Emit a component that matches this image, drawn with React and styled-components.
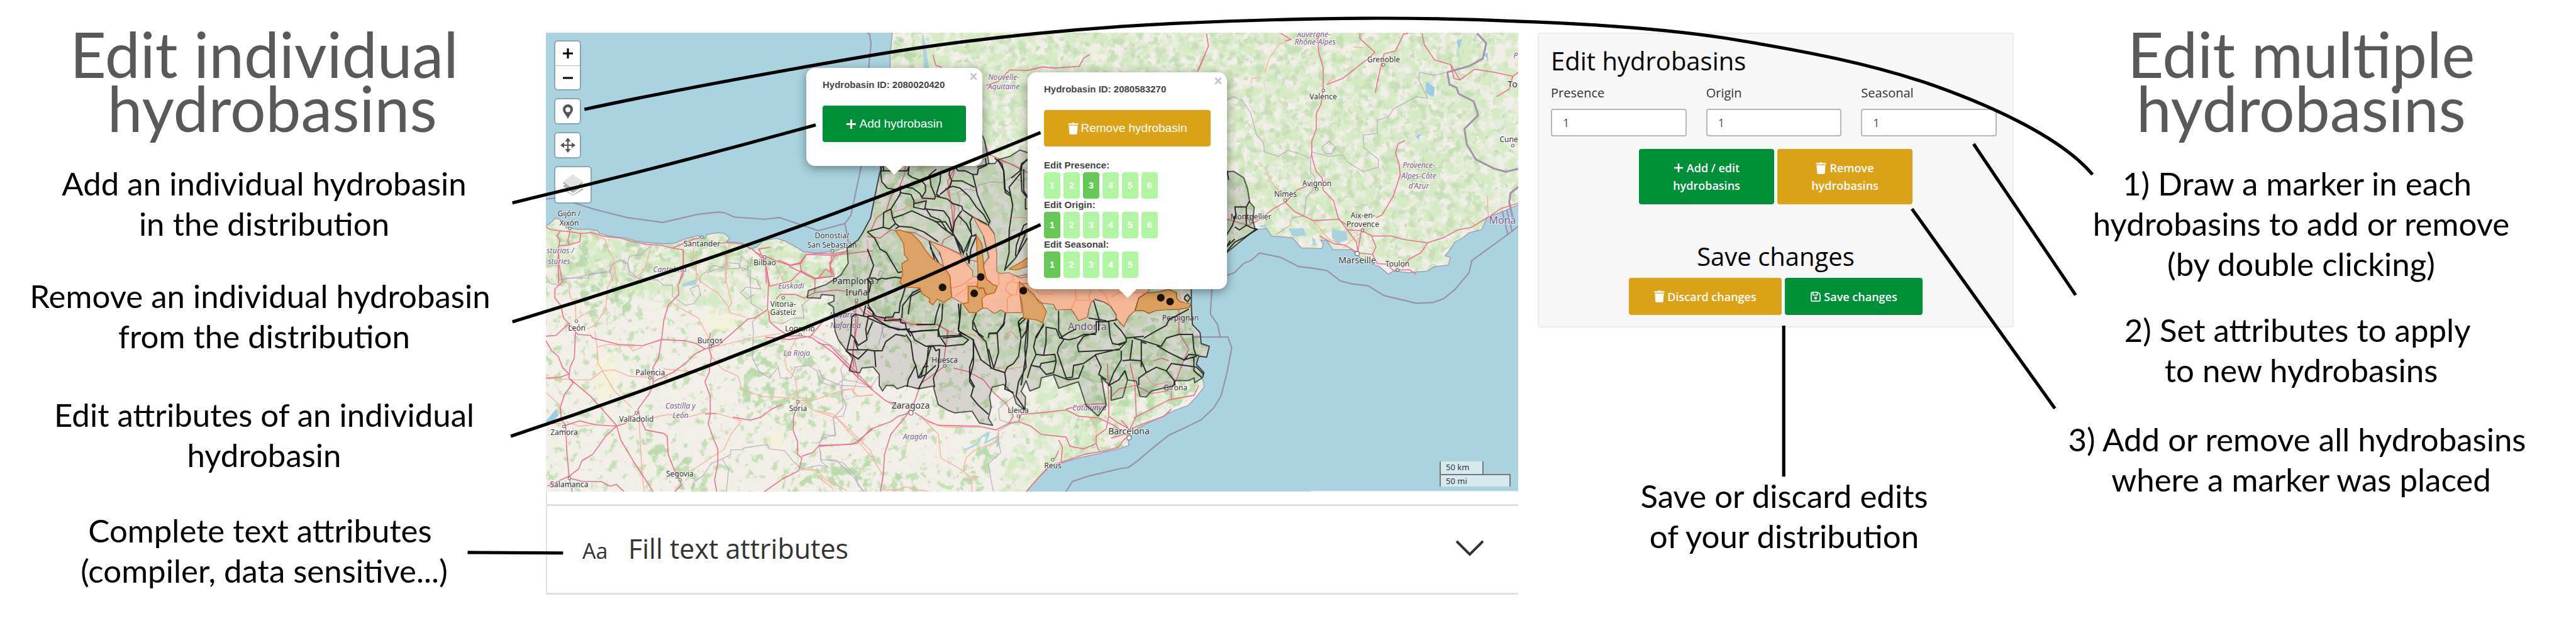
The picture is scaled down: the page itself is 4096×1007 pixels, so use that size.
import React from "react";
import styled, { createGlobalStyle, css } from "styled-components";
import { FaRegFloppyDisk } from "react-icons/fa6";

const GlobalStyle = createGlobalStyle`
  * { box-sizing: border-box; }
  body { margin: 0; background: #fff; }
  h1, h2, p { margin: 0; font-weight: 400; }
  button, input { font: inherit; margin: 0; }
`;

/* ---------- page ---------- */

const Page = styled.main`
  position: relative;
  display: grid;
  grid-template-columns: 868fr 1546fr 788fr 894fr;
  align-items: start;
  color: #000;
  overflow: hidden;
`;

const NoteColumn = styled.section`
  padding: 42px ${(p) => (p.$side === "left" ? "28px 0 0" : "0 0 20px")};
  font-family: Lato, "Liberation Sans", sans-serif;
  text-align: center;
  white-space: pre;
`;

const NoteTitle = styled.h1`
  font-size: 100px;
  line-height: 86px;
  color: #595959;
`;

const Note = styled.p`
  margin-top: ${(p) => p.$before}px;
  font-size: 51px;
  line-height: 64px;
`;

const Connectors = styled.svg`
  position: absolute;
  top: 0;
  left: 0;
  width: 100%;
  pointer-events: none;
  z-index: 5;
`;

/* ---------- map ---------- */

const Editor = styled.section`
  padding-top: 52px;
`;

const MapFrame = styled.div`
  position: relative;
  overflow: hidden;
  font-family: "Liberation Sans", Arial, sans-serif;
`;

const MapDrawing = styled.svg`
  display: block;
  width: 100%;
  aspect-ratio: 1546 / 730;
  background: #aad3df;
  font-family: "Noto Sans", "Open Sans", sans-serif;
`;

const ControlStack = styled.div`
  position: absolute;
  top: 14px;
  left: 15px;
  display: flex;
  flex-direction: column;
  align-items: flex-start;
  gap: 16px;
`;

const ControlBar = styled.div`
  display: flex;
  flex-direction: column;
  border-radius: 4px;
  background: #fff;
  box-shadow: 0 0 0 2px rgba(70, 110, 125, 0.4);
`;

const ControlButton = styled.button`
  display: flex;
  align-items: center;
  justify-content: center;
  width: ${(p) => (p.$large ? 56 : 39)}px;
  height: ${(p) => (p.$large ? 56 : 38)}px;
  padding: 0;
  border: 0;
  background: none;
  & + & { border-top: 1px solid #bbb; }
`;

const ScaleBox = styled.div`
  position: absolute;
  right: 12px;
  bottom: 8px;
  font-family: "Noto Sans", sans-serif;
  font-size: 13px;
  line-height: 18px;
  color: #333;
`;

const ScaleLine = styled.div`
  width: ${(p) => p.$width}px;
  height: 20px;
  padding-left: 8px;
  border: 2px solid #777;
  border-top: ${(p) => (p.$joined ? "2px solid #777" : "0")};
  border-bottom: 0;
  background: rgba(255, 255, 255, 0.5);
`;

const PopupCard = styled.article`
  position: absolute;
  left: ${(p) => p.$left}px;
  top: ${(p) => p.$top}px;
  width: ${(p) => p.$width}px;
  padding: 17px 26px ${(p) => p.$bottom}px;
  border-radius: 14px;
  background: #fff;
  color: #444;
  font-size: 15px;
  font-weight: 700;
  line-height: 20px;
  box-shadow: 0 4px 16px rgba(0, 0, 0, 0.4);
  & > p { font-weight: 700; }
  &::after {
    content: "";
    position: absolute;
    top: 100%;
    left: calc(50% - 14px);
    border: 14px solid transparent;
    border-top-color: #fff;
    border-bottom: 0;
  }
`;

const CloseButton = styled.button`
  position: absolute;
  top: 4px;
  right: 4px;
  width: 20px;
  height: 20px;
  padding: 0;
  border: 0;
  background: none;
  color: #c3c3c3;
  font-size: 22px;
  font-weight: 700;
  line-height: 20px;
`;

const tones = { green: "#008f39", amber: "#dca217" };

const ActionButton = styled.button`
  display: ${(p) => (p.$block ? "flex" : "inline-flex")};
  align-items: center;
  justify-content: center;
  gap: 4px;
  width: ${(p) => (p.$block ? "100%" : `${p.$width}px`)};
  height: ${(p) => p.$height}px;
  padding: 0;
  border: 0;
  border-radius: 4px;
  background: ${(p) => tones[p.$tone]};
  color: #fff;
  ${(p) =>
    p.$block
      ? css`
          margin-top: 23px;
          font-size: 19px;
          font-weight: 400;
        `
      : css`
          font-size: 18px;
          font-weight: 600;
        `}
  line-height: 28px;
  & svg { flex: none; }
`;

const StackedLabel = styled.span`
  display: flex;
  flex-direction: column;
  align-items: center;
`;

const LabelLine = styled.span`
  display: inline-flex;
  align-items: center;
  gap: 5px;
`;

const CodeGroups = styled.div`
  margin-top: 20px;
`;

const CodeGroup = styled.div`
  display: flex;
  flex-wrap: wrap;
  gap: 1px 5px;
`;

const CodeName = styled.span`
  flex: 0 0 100%;
`;

const CodeButton = styled.button`
  width: 26px;
  height: 42px;
  padding: 0;
  border: 0;
  border-radius: 4px;
  background: ${(p) => (p.$active ? "#66c957" : "#b0f5a2")};
  color: #fff;
`;

/* ---------- accordion ---------- */

const AccordionGap = styled.div`
  height: 23px;
  border-left: 2px solid #dee2e6;
  border-bottom: 3px solid #dee2e6;
`;

const AccordionHeader = styled.button`
  display: flex;
  align-items: center;
  width: 100%;
  height: 141px;
  padding: 0 54px 4px 56px;
  border: 0;
  border-left: 2px solid #dee2e6;
  border-bottom: 3px solid #dee2e6;
  background: #fff;
  color: #333;
  font-family: "Open Sans", "Noto Sans", sans-serif;
  font-size: 43px;
  text-align: left;
`;

const TextGlyph = styled.span`
  width: 73px;
  padding-top: 8px;
  font-size: 34px;
`;

const AccordionLabel = styled.span`
  flex: 1;
`;

/* ---------- side panel ---------- */

const SideColumn = styled.section`
  padding: 52px 0 0 31px;
`;

const Panel = styled.form`
  padding: 19px 19px 18px;
  border: 2px solid #e9ebed;
  border-radius: 4px;
  background: #f7f7f7;
  font-family: "Open Sans", "Noto Sans", sans-serif;
`;

const PanelTitle = styled.h2`
  margin-top: ${(p) => (p.$center ? 59 : 0)}px;
  font-size: 40px;
  line-height: 48px;
  text-align: ${(p) => (p.$center ? "center" : "left")};
`;

const Fields = styled.div`
  display: grid;
  grid-template-columns: repeat(3, 1fr);
  gap: 31px;
  margin-top: 13px;
  padding-right: 6px;
`;

const Field = styled.label`
  display: flex;
  flex-direction: column;
  gap: 11px;
  color: #333;
  font-size: 20px;
  line-height: 28px;
`;

const FieldInput = styled.input`
  width: 100%;
  height: 44px;
  padding: 0 17px;
  border: 2px solid #b3b8bd;
  border-radius: 4px;
  background: #fff;
  color: #495057;
  font-size: 18px;
`;

const ButtonRow = styled.div`
  display: flex;
  justify-content: center;
  gap: 5px;
  margin-top: ${(p) => p.$before}px;
`;

const PanelNote = styled(Note)`
  font-family: Lato, "Liberation Sans", sans-serif;
  text-align: center;
  padding-left: 27px;
`;

/* ---------- icons ---------- */

const PlusIcon = ({ size = 17 }) => (
  <svg width={size} height={size} viewBox="0 0 18 18" aria-hidden="true">
    <path d="M9 1v16M1 9h16" stroke="#fff" strokeWidth="3" />
  </svg>
);

const TrashIcon = ({ size = 19 }) => (
  <svg width={size - 2} height={size} viewBox="0 0 17 20" fill="#fff" aria-hidden="true">
    <path d="M5.500 1.200Q6 .2 7 .2h3q1 0 1.500 1H16q1 0 1 1v1.600H0V2.200q0-1 1-1zM1 5h15l-1 13.500q-.2 1.500-1.700 1.500H3.700Q2.200 20 2 18.500z" />
  </svg>
);

const PinIcon = () => (
  <svg width="16" height="23" viewBox="0 0 16 23" aria-hidden="true">
    <path fillRule="evenodd" fill="#555" d="M8 0a8 8 0 0 1 8 8c0 4.500-4.500 8-8 15C4.500 16 0 12.500 0 8a8 8 0 0 1 8-8zm0 4.500a4 4 0 1 0 0 8 4 4 0 0 0 0-8z" />
  </svg>
);

const MoveIcon = () => (
  <svg width="24" height="24" viewBox="0 0 24 24" aria-hidden="true">
    <path d="M12 4v16M4 12h16" stroke="#555" strokeWidth="2.200" />
    <path fill="#555" d="M12 0l4.500 6h-9zM12 24l-4.500-6h9zM0 12l6-4.500v9zM24 12l-6 4.500v-9z" />
  </svg>
);

const LayersIcon = () => (
  <svg width="34" height="34" viewBox="0 0 34 34" aria-hidden="true">
    <path fill="#b5b5b5" d="M1 22l16 11 16-11v3L17 34 1 25z" />
    <path fill="#aaa" d="M1 19l16 11 16-11-3-2-13 9-13-9z" />
    <path fill="#8f8f8f" d="M1 14l16 12 16-12-2-1-14 10L3 13z" />
    <path fill="#e2e2e2" d="M17 0l16 12-16 12L1 12z" />
  </svg>
);

const ChevronIcon = () => (
  <svg width="46" height="28" viewBox="0 0 46 28" aria-hidden="true">
    <path d="M2 3l21 21L44 3" fill="none" stroke="#333" strokeWidth="4" />
  </svg>
);

/* ---------- map data ---------- */

const UNIT = 1546 / 1782;
const mapX = (x) => Math.round((x - 1001) * UNIT);
const mapY = (y) => Math.round((y - 60) * UNIT);

const northCoast =
  "1001,415 1010,408 1019,400 1027,403 1039,417 1060,421 1079,420 1095,423 1099,428 1118,433 1150,437 1166,442 1186,445 1217,447 1237,446 1257,438 1280,432 1292,438 1296,430 1316,427 1328,428 1338,437 1332,443 1360,445 1375,457 1387,453 1399,442 1423,437 1439,442 1458,452 1474,462 1498,464 1530,460 1553,453 1573,440 1585,420 1596,400 1604,360 1612,320 1622,230 1632,125 1632,100 1636,60";
const southCoast =
  "2783,376 2747,391 2726,399 2716,421 2693,427 2680,437 2667,444 2658,458 2649,469 2659,472 2655,486 2630,489 2617,497 2583,500 2554,497 2545,503 2529,489 2499,478 2487,466 2478,458 2444,458 2432,441 2421,440 2426,448 2423,456 2400,455 2386,455 2369,436 2331,433 2322,419 2301,421 2272,444 2249,464 2210,490 2188,510 2184,530 2184,563 2186,595 2200,610 2202,630 2217,635 2212,655 2198,653 2193,668 2207,683 2202,693 2207,700 2207,710 2193,728 2179,743 2152,753 2129,765 2101,777 2083,788 2069,805 2069,817 2051,823 2014,832 1977,840 1950,848 1918,860 1906,873 1881,902";
const landPoints = `${northCoast} 2783,60 ${southCoast} 1001,902`;

const basinPoints =
  "1612,320 1604,360 1596,400 1580,430 1573,440 1553,455 1555,483 1541,505 1514,522 1482,533 1480,546 1504,547 1506,540 1529,542 1529,552 1518,557 1528,563 1531,607 1537,623 1551,642 1563,657 1557,680 1576,684 1580,675 1601,673 1612,687 1612,707 1618,717 1625,707 1638,707 1645,713 1661,707 1684,713 1711,708 1720,742 1739,753 1750,757 1782,754 1796,776 1820,780 1812,767 1817,747 1814,727 1819,710 1840,705 1858,723 1863,740 1879,752 1880,728 1872,718 1881,698 1888,717 1906,710 1909,693 1931,687 1941,712 1977,700 1991,743 2013,763 2028,743 2019,692 2037,710 2037,734 2058,729 2067,697 2083,699 2090,727 2101,728 2111,717 2152,707 2154,698 2179,698 2189,693 2190,702 2205,692 2207,683 2193,668 2198,653 2212,655 2217,635 2202,630 2200,610 2186,595 2184,563 2184,530 2188,510 2249,463 2301,421 2297,405 2299,380 2291,371 2287,346 2280,326 2261,314 2249,315 2100,260 1884,280 1870,275 1851,287 1829,293 1824,300 1813,300 1805,257 1800,247 1640,247";

/* Each sheet holds line work digitised on its own grid. */
const sheets = {
  northWest: "translate(980 40) scale(.3954 .3333)",
  southWest: "translate(980 460) scale(.3954 .3333)",
  aquitaine: "translate(1450 100) scale(.5421 .3333)",
  gascony: "translate(1590 290) scale(.3333)",
  aragon: "translate(1500 480) scale(.4591 .3333)",
  provence: "translate(2150 40) scale(.4209 .5612)",
};

const motorways = {
  northWest: [
    "M53 1130L80 1145 120 1150 165 1155 215 1165 265 1160 320 1180 400 1190 440 1205 520 1225 590 1230 640 1245 700 1215 740 1195 780 1185M780 1230L830 1222 900 1215 960 1222 1010 1250 1030 1275 1070 1290 1130 1320 1185 1340 1230 1325 1260 1280 1320 1275 1390 1275 1450 1262M120 1150L105 1180 118 1200 112 1240 110 1320 112 1440M165 1155L155 1200 160 1228 115 1232M215 1165L210 1210 160 1228M590 1230L640 1245 690 1255 690 1320 685 1380 670 1440M1060 1300L1040 1250 1095 1240M1070 1300L1075 1440M1230 1325L1240 1380 1180 1345M1450 1262L1390 1290 1370 1340 1390 1400 1300 1415 1240 1380",
  ],
  southWest: [
    "M112 0L115 80 130 170 95 210 95 260 122 300 135 370 160 400 200 460 260 465 270 480 390 515 500 522 590 488 700 495 750 510 790 540 850 520 900 470 990 375 1020 370 1080 325 1085 180 1070 60 1030 10",
    "M690 0L690 130 665 190 670 240 620 300 600 380 590 480 575 590 550 640 550 740 530 790 480 870 490 920 515 985 600 1005 615 1020 620 1120 650 1210 675 1260 680 1290 650 1325",
    "M53 470L100 465 160 400M190 450L185 590 165 640 160 700 260 800 320 880 380 960 400 1040 460 1160 510 1250 550 1325M160 700L180 725 140 790 120 860 125 930 145 960 210 935 240 945 290 958 380 965 420 950 465 900M53 700L120 695 160 678M53 495L80 550 110 580 130 640 160 678M145 965L150 1100 160 1240 175 1325M380 965L330 1020 270 1120 220 1155 205 1200 160 1240 60 1295M160 1250L220 1268 310 1270 350 1295 380 1285 415 1325",
    "M815 450L810 540 820 580 810 670 790 720 815 800 815 900 805 950 830 1035 850 1090 850 1170 835 1260 845 1325M790 540L740 570 700 620 640 670 550 720M790 898L840 895M920 915L1000 932 1050 915 1100 870 1150 845M1220 840L1200 920 1200 990 1220 1050 1220 1120 1240 1140 1225 1210 1150 1255 1065 1325M1240 1130L1290 1110 1320 1070 1470 1065 1500 1045 1568 980M1085 330L1090 390 1130 430 1180 470 1230 465 1290 480 1320 510 1370 520 1410 570 1470 640 1568 765M1070 475L1180 488 1280 470M1280 470L1350 370M1120 265L1140 240 1210 240 1250 260 1300 230 1400 215 1500 235M1300 150L1300 230M1480 640L1475 560 1500 370 1475 320",
    "M1130 50L1190 80 1235 70 1260 20 1380 25 1568 0M1075 90L1090 195 1190 165 1235 110 1300 150 1380 140 1370 80 1380 25",
  ],
  aquitaine: [
    "M480 0L490 60 510 70M660 170L700 150 740 85 800 88 850 68 890 75 975 65 990 20 1010 0M1400 0L1385 60 1375 95M655 480L670 550 740 600 800 650M555 620L530 700 545 860 550 980M1475 910L1540 900 1568 890",
  ],
  gascony: [
    "M210 45L205 90 180 150 130 210 105 290 50 330 20 400M0 430L70 440 130 395 200 405 260 410 340 455 430 490 520 530 560 560 640 575 700 600 720 635 740 650M480 45L475 90 440 180 460 240 480 270 470 420 420 450 405 490M720 10L800 35 880 80M0 840L50 880 180 885 240 915 390 915 440 950 440 990M780 640L830 650 880 640",
  ],
  aragon: [
    "M0 90L30 40 50 60 45 0M0 440L60 500 110 570 160 640 220 710 270 765 340 810M60 500L130 590 160 640 150 570 140 500 150 330 150 215 180 280 250 320 330 330 400 350 470 345 520 380 510 460 500 560M500 580L410 670 385 770 350 850M370 830L320 850 290 880 210 920 155 1000 60 1010 0 1015M350 850L290 950 265 1060 260 1170 248 1265",
    "M385 830L430 870 480 900 640 905 710 925 760 890 800 880 850 905 890 950 990 965 1005 1015 1060 1030M540 585L600 605 660 650 700 720 750 780 780 850 760 890M800 880L810 840 900 830 990 815 1040 850 1120 860 1180 900 1240 960M990 810L1070 785 1150 780M1155 560L1160 780 1160 850 1190 880 1240 920 1210 870M1245 560L1265 680 1270 850 1245 920 1300 890 1380 850 1410 810M1165 750L1200 700 1265 680 1330 725 1400 710 1430 650 1460 540 1480 480 1440 390 1440 250",
    "M830 1265L885 1180 930 1120 1000 1090 1060 1060 1150 1040 1200 1020 1220 980 1240 960M960 980L975 1020 970 1100M945 1085L960 1040M1060 1030L1110 1000 1110 960 1150 920 1160 850M1110 1000L1120 1040M1260 860L1330 810 1400 760 1500 735 1520 680M1410 700L1410 760M1340 545L1370 530 1400 545M1170 970L1220 950",
  ],
  provence: [
    "M147 38L155 80 120 140 108 162M630 38L635 100 655 150 655 225 645 270 625 300 625 350 605 390 605 440 625 490 650 510 655 550 700 585 720 640 760 680 800 720 805 750M470 38L515 58 490 62M815 38L815 55 880 100 850 120 800 150 740 185 670 205M905 150L920 105 970 95 1005 40 1025 38M905 150L890 200 882 232M1085 38L1095 75 1140 125 1210 140 1250 190 1315 155 1400 165 1480 178 1505 165M1210 140L1225 185 1250 190M1480 178L1465 220 1410 245",
    "M235 645L330 665 370 650 440 610 490 590 540 550 590 535 620 540M490 590L530 620 570 635 615 650 720 645 760 665M640 700L700 725 750 730 805 755M760 680L820 682 870 700 950 700 1010 712 1110 722 1180 705 1240 680 1300 672 1370 640 1430 610 1505 592M805 755L870 760 885 735 865 700M805 755L820 685M870 760L890 790 930 792 960 812 1030 810 1060 825M1110 722L1080 755 1030 775 1000 805M885 640L910 632 960 570 990 500 985 465 970 430 980 400 1010 388",
  ],
};

const trunks = {
  northWest: ["M270 1168L330 1200 335 1240 370 1310 380 1440M540 1230L520 1330 500 1380 460 1410M740 1240L730 1330 760 1400 770 1440M900 1225L895 1320 885 1440M1110 1310L1140 1390 1155 1440"],
  southWest: ["M160 180L165 250 190 300 192 380M260 330L200 370M350 60L375 110 340 200 330 320 280 410 245 430M750 0L750 150 820 210 850 230 900 310 905 340 980 365M885 0L885 150 915 290 900 310M280 440L290 530 295 620 315 660 260 710 200 710 53 700M315 660L370 655 440 690 530 695M290 530L340 515 440 525 455 550 500 530M315 660L370 770 450 860M600 650L740 665 790 690M640 290L760 370 790 440 815 490M850 525L1000 480 1140 455M820 580L870 650 945 690 960 760 1050 800 1190 810 1220 825M1220 470L1160 600 1170 650 1210 700 1222 825 1300 820 1420 770M1222 825L1300 880 1400 920 1500 1050 1568 1140M540 920L620 900 710 915 790 890 850 895 960 935 910 1010 880 1090 740 1200 700 1265M485 930L500 1240 510 1325M53 780L110 840 125 890M53 950L130 950M145 940L210 965 290 955M1230 1205L1310 1205 1350 1260 1450 1320M1420 765L1470 760 1490 800 1568 795"],
  gascony: ["M105 305L200 280 260 240 330 215 400 210M0 450L10 530 0 560M800 325L880 330M590 560L585 600"],
  aragon: ["M0 820L60 840 130 930 210 1040 225 1100 260 1180M160 640L140 710 160 740 220 730M415 860L480 950 490 1080 580 1150 600 1180 640 1180M580 1150L590 1080 620 1040 710 990 720 930M430 880L510 910 650 910M640 1180L610 1190 615 1265M90 710L140 700M520 380L560 400 620 400 660 440M700 580L760 590 830 575M740 420L770 380 800 430M1090 860L1110 920 1110 1000M0 1180L60 1250M250 1255L320 1255 350 1240 440 1265M1310 630L1340 680 1400 660"],
  provence: ["M515 58L460 75 420 120 400 165M380 182L345 185 340 202M410 495L425 520 465 555M530 620L610 650 680 710 740 730M670 205L700 180M1370 570L1370 600 1375 640M1290 650L1320 665M740 740L800 700 850 680M650 520L690 515M600 110L610 100M785 82L830 85"],
};

const borders = {
  northWest: ["M350 1370L355 1340 400 1310 430 1335 440 1290 500 1280 540 1230M110 1420L180 1408 350 1370 365 1430M900 1325L945 1330 965 1370 1000 1345 1010 1290M890 1240L890 1340 850 1360 800 1380M1000 1360L1000 1430M430 1335L440 1390 480 1410 560 1415"],
  southWest: ["M53 140L75 180 130 190 140 150 250 150 260 125 350 120 365 70 400 50 435 70 440 110 490 160 570 160 600 190 640 190 640 250 700 300 740 290 770 240 760 190 720 210 740 250M770 180L770 140 830 80 900 100 950 95 960 30 990 60 990 140 1030 160 1050 210 980 200 955 230 985 265 1020 240M960 90L995 110M1030 370L1010 390 1015 440 1010 590 1040 660 1090 700 1130 640 1140 700 1190 700 1210 640 1270 630 1310 660 1320 720 1390 750 1430 710 1420 650 1450 590M1430 710L1490 720 1568 750M1425 710L1430 810 1445 860 1430 910 1385 915 1395 1020 1340 1010 1320 1070 1330 1160 1360 1190 1320 1180 1240 1200 1200 1160 1160 1100 1090 1090 1080 1065 970 1085 960 1095 910 1095 910 1120 870 1145 900 1200 890 1325M870 1145L820 1170 780 1240 740 1270 730 1325M1360 1150L1430 1165 1490 1240 1500 1290 1530 1325M1090 390L1150 400 1200 370 1250 370 1240 300 1290 250M1280 460L1330 490 1390 530 1440 590M1000 150L1005 290 1060 330"],
  gascony: ["M880 110L850 130 800 100 740 135 680 130 610 150 600 180 540 170 495 190 510 230 500 280 520 330 510 370M470 690L520 650 530 600 560 570M80 920L90 990M60 650L70 620 90 630 70 660"],
  aragon: ["M0 590L20 640 90 680 210 690 240 630M90 680L100 800 60 860 70 950 20 970 0 1000M10 1040L10 1090 70 1090 140 1180 180 1265M780 740L720 810 725 870 770 890 720 930 720 1000 730 1050 680 1110 690 1200 700 1265M240 460L260 360 330 360"],
  provence: ["M235 255L265 245 305 258 340 300 365 370 395 395 400 425 460 440 500 420 550 430 600 445 605 425 680 440 740 435 760 458 830 490 895 475 895 450 830 410 830 370 890 365 890 322 940 310 960 285 1060 245 1110 250 1070 190 1075 165 1140 175 1195 165M650 410L680 390 710 410 690 432 660 430zM600 445L600 490 620 510 610 550 580 575 575 620 570 635 520 640 510 665 450 695"],
};

const nationalBorders = {
  provence: ["M1325 38L1365 70 1350 120 1290 145 1195 165 1205 205 1235 215 1245 235 1310 260 1330 305 1270 350 1280 400 1320 450 1400 480 1450 490 1505 480M1505 540L1470 560 1465 590 1480 640"],
};

const maritime = [
  "M1001 365L1030 362 1059 374 1087 383 1150 399 1215 408 1280 393 1316 389 1328 390 1346 398 1401 402 1429 399 1450 406 1500 423 1549 410 1553 430 1556 450",
  "M1549 410L1560 395 1579 305 1592 130 1597 80 1594 62 1590 60",
  "M2240 508L2263 500 2280 483 2293 478 2309 464 2348 472 2381 489 2400 491 2432 496 2457 515 2480 521 2508 524 2537 542 2596 556 2626 555 2646 548 2667 531 2693 500 2698 478 2764 430 2783 415",
  "M2222 520L2219 576 2232 595 2237 618M2188 618L2251 618 2258 638 2249 685 2238 727 2225 748 2202 770 2175 783 2143 798 2115 820 2088 843 2069 857 2051 860 1996 873 1966 883 1954 902",
  "M2754 388L2764 430M2762 385L2772 425",
];

const basinLines = {
  gascony: [
    "M75 45L75 95 80 130 110 165 165 175 185 155M75 70L90 70 90 45M75 70L220 70 230 45M230 45L225 90 245 105 300 125 320 150 320 185 300 215 290 195 250 165 205 160 185 155 180 200 130 280 90 300 88 380 0 405",
    "M180 190L240 200 257 235 255 270 315 283 325 235 260 250M300 220L370 225 375 210 350 150 345 100M300 120L330 110 345 90 380 60M405 70L400 130 380 200 400 210M380 210L440 225 470 250 520 265 525 285 575 320 660 365M455 55L450 90 465 125 520 125 590 160M465 125L455 155 400 200M430 170L470 155 510 165 560 210 600 270 640 310 665 355",
    "M650 0L655 40 610 60 605 90 580 90 540 70 500 70 480 45M580 90L595 150 605 200 630 260 675 345 665 370M320 280L420 290 450 330 470 405M320 275L350 320 400 340 440 400 480 430 525 520M140 330L200 310 245 290 310 320 380 350 410 380 480 430 515 525M130 280L140 330 155 360 175 375 240 380 310 405 390 460M88 380L120 390 155 360M155 390L175 375M370 350L430 350 520 490 530 530",
    "M520 290L500 315 545 360 575 420 560 470 545 515M500 315L480 350 470 410M580 320L565 350 575 430 600 420M530 520L570 430 600 425M560 580L570 500 600 430M545 520L560 580",
    "M0 405L40 440 70 500 105 520 140 580 170 630 190 625M0 500L20 550 35 590 10 660 40 660 60 670 80 660 100 665 150 655 190 660M0 660L20 690 10 740M210 705L195 760 180 800 175 850 150 850 140 875 100 875 95 895 140 890 190 890M190 880L195 810 250 740 300 715M225 860L240 760 295 730M0 820L30 845 35 870 0 870M35 875L120 930 200 945 235 940M180 880L185 905 210 910 215 940 240 960 290 950 390 945 390 985M270 915L370 915 380 860 400 800M415 800L410 890 390 945M215 940L240 980M0 970L30 900",
    "M515 800L510 880 500 940 520 980 415 990M600 850L580 900 580 940 640 985M760 850L750 910 715 960 670 965 665 990M830 900L850 880 885 875 880 940 850 990M830 900L840 960M970 910L930 990M540 975L500 950M345 490L400 590M340 455L350 490 370 560M395 510L420 580",
    "M700 0L740 30 750 70 755 170 790 200M880 5L850 40 845 80 780 160 800 260 780 400 780 520 755 620M860 60L860 180 880 210M845 75L850 180 880 220M870 220L870 280 880 280M880 360L860 370 820 480 815 540M880 390L840 490 830 520M880 440L815 550 755 615M640 430L670 545 650 575M665 370L700 420",
  ],
  aragon: [
    "M135 300L150 290 200 305 190 370 195 430 160 460 145 420 130 400zM130 400L115 485 200 485 220 490 255 490 270 440 310 400 350 410M200 310L250 340 320 375 350 370 370 385 480 375M145 430L160 485M110 490L160 535 200 480M225 490L230 580M190 240L180 300M200 95L200 240 230 300 270 310",
    "M350 400L370 440 380 540 390 570 400 640 430 620 440 470 460 465 470 490 485 480M370 385L385 430 430 465 485 460 510 465 580 455 600 430 560 395M485 410L570 405M480 375L485 410 510 460M390 570L360 650 355 690M400 640L430 560 450 470M410 640L420 580 440 575M485 480L480 580 460 640 465 690M400 700L430 620 470 570M560 230L565 320 560 380 620 430 620 560 605 640 625 690",
    "M620 430L620 520 605 580 605 660 620 690 610 740 640 790 680 840M620 330L640 400 670 440 690 590M680 395L715 395 720 500 700 590 745 610M620 440L650 540 700 590M745 330L740 350 715 390M800 330L810 420 800 520 780 560 755 580 745 610 750 660 745 700 780 720M830 310L800 350 810 380M835 330L825 480 830 580 800 660 790 740 825 810M840 320L835 460 820 600 810 680M680 480L700 580",
    "M900 350L870 410 860 470 870 510 900 515 910 440 910 360 950 370 965 420 1000 390 1030 370M870 510L850 570 885 580 910 620 940 610 950 550 945 510 900 515M850 570L835 640M885 580L890 560 950 545M960 270L960 380 980 430 960 470 955 500 970 560 990 640 1015 635 1020 570 1060 560 1110 510 1200 480M965 420L1000 430 1030 420 1060 400 1110 400M1035 460L1040 495 1120 490 1200 485 1230 440 1200 460M1035 460L1060 410 1110 390 1110 330 1160 330 1165 410 1175 450 1195 455 1230 440 1230 420 1300 410",
    "M940 620L1000 650 1040 640 1060 570M1105 510L1130 580 1120 620 1150 650M1210 490L1210 540 1180 610 1160 680 1200 650 1225 600 1235 650M1255 430L1245 540 1290 545 1290 440 1310 450M1215 545L1245 540M1180 335L1210 380 1230 420M1300 420L1350 380 1390 350 1400 320 1480 260M1260 420L1310 440 1370 465 1390 420 1440 400 1495 400 1500 480 1510 520 1460 540 1400 500 1350 460M1290 545L1310 610 1350 580 1390 600 1420 650 1425 680M1390 600L1410 560 1510 580 1540 620M1460 545L1480 510 1520 515M1500 520L1500 600 1530 635M1310 610L1280 640 1280 680M1290 540L1290 580M1100 215L1120 310 1120 380M1080 310L1150 325",
    "M1100 205L1140 220 1165 240 1190 290 1190 320 1150 330M1465 190L1475 180 1485 200 1475 220 1462 205z",
  ],
  aquitaine: [
    "M700 580L720 640 725 760 745 780M800 580L780 600 775 640 745 680M670 600L630 620",
    "M1475 640L1480 690",
  ],
  provence: [
    "M335 585L320 605 270 605 275 630 260 665 235 695M320 605L320 665 290 680 270 670M320 665L350 675 368 678 310 705 270 720 235 750M270 710L235 735 250 715M275 635L262 640",
  ],
};

const occupied = [
  "M155 400L175 395 245 415 290 460 330 520 360 555 420 595 455 650 460 730 465 765 420 795 385 775 360 808 340 790 345 775 300 745 290 715 210 710 180 685 195 640 190 580 225 560 205 530 200 470z",
  "M555 705L600 705 615 720 640 715 650 750 630 775 635 825 600 850 560 850 525 800 555 795z",
  "M600 425L630 470 640 600 655 665 690 695 715 705 700 740 655 752 640 715 605 710 610 650 605 560z",
  "M835 680L870 710 915 750 945 795 960 800 985 845 965 905 930 890 860 880 850 790 840 755z",
  "M780 610L850 570 885 545 885 595 820 615z",
];
const candidate = [
  "M340 455L430 490 510 530 555 590 580 620 580 650 610 655 605 705 555 705 555 795 525 800 465 765 455 650 420 595 400 520z",
  "M580 320L620 350 665 372 700 420 705 470 712 520 712 620 725 635 780 630 840 660 890 650 900 720 870 710 835 680 840 755 850 850 760 850 735 835 700 855 655 825 635 825 630 775 655 752 700 740 715 705 690 695 655 665 640 600 645 575 670 545 640 430z",
];

const towns = [
  [1045, 419], [1287, 435], [1526, 460], [1402, 471], [1436, 546], [1570, 551], [1057, 589], [1467, 614],
  [1302, 635], [1192, 693], [1463, 737], [1167, 757], [1034, 782], [1247, 880], [1044, 877], [1732, 671],
  [1867, 763], [1930, 843], [2536, 119], [2426, 166], [2356, 367], [2414, 347], [2293, 406], [2498, 422],
  [2562, 495], [2773, 267], [1670, 757, 4], [2070, 803, 4], [2488, 465, 4],
];

const labels = [
  ["Gijón /", 1044, 397], ["Xixón", 1044, 414], ["Santander", 1287, 452], ["Donostia/", 1526, 437],
  ["San Sebastián", 1526, 454], ["Bilbao", 1402, 487], ["Vitoria-", 1436, 562], ["Gasteiz", 1436, 578],
  ["León", 1057, 606], ["Logroño", 1467, 607], ["Burgos", 1302, 629], ["Palencia", 1192, 688], ["Soria", 1463, 754],
  ["Valladolid", 1167, 773], ["Zamora", 1034, 798], ["Segovia", 1247, 874], ["Salamanca", 1044, 893],
  ["Perpignan", 2164, 588], ["Huesca", 1732, 665], ["Girona", 2155, 716], ["Lleida", 1867, 757], ["Reus", 1930, 859],
  ["Grenoble", 2536, 114], ["Valence", 2426, 182], ["Nîmes", 2356, 361], ["Avignon", 2414, 341],
  ["Montpellier", 2293, 402], ["Aix-en-", 2498, 400], ["Provence", 2498, 416], ["Toulon", 2562, 489],
  ["Cune", 2766, 260],
  ["Pamplona /", 1569, 521, "city"], ["Iruña", 1570, 542, "city"], ["Zaragoza", 1670, 749, "city"],
  ["Barcelona", 2070, 796, "city"], ["Marseille", 2488, 483, "city"], ["To", 2773, 160, "city"],
  ["sturias /", 1028, 465, "region"], ["sturies", 1025, 484, "region"], ["Cantabria", 1228, 499, "region"],
  ["Euskadi", 1450, 529, "region"], ["Navarra", 1546, 582, "region"], ["- Nafarroa", 1546, 602, "region"],
  ["La Rioja", 1461, 653, "region"], ["Castilla y", 1248, 749, "region"], ["León", 1248, 767, "region"],
  ["Catalunya", 1997, 753, "region"], ["Aragón", 1678, 806, "region"], ["Auvergne-", 2408, 68, "region"],
  ["Rhône-Alpes", 2411, 82, "region"], ["Provence-", 2601, 308, "region"], ["Alpes-Côte", 2601, 327, "region"],
  ["d'Azur", 2601, 346, "region"], ["Nouvelle-", 1840, 146, "region"], ["Aquitaine", 1840, 164, "region"],
  ["P", 2778, 107, "region"],
  ["Andorra", 1994, 605, "country"], ["Mona", 2754, 410, "country"],
];

const MapLabel = styled.text`
  font-size: ${(p) => ({ city: 14, country: 16 }[p.$kind] || 12)}px;
  font-style: ${(p) => (p.$kind === "region" ? "italic" : "normal")};
  fill: ${(p) => (p.$kind === "region" || p.$kind === "country" ? "#7d5a88" : "#333")};
  stroke: rgba(255, 255, 255, 0.7);
  stroke-width: 2px;
  stroke-linejoin: round;
  paint-order: stroke;
  text-anchor: middle;
`;

const SheetLines = ({ data, ...line }) =>
  Object.entries(data).map(([sheet, paths]) => (
    <g key={sheet} transform={sheets[sheet]} fill="none" strokeLinejoin="round" {...line}>
      {paths.map((d) => (
        <path key={d} d={d} vectorEffect="non-scaling-stroke" />
      ))}
    </g>
  ));

const Texture = ({ id, color, frequency, gain, cut, seed }) => (
  <filter id={id} x="0" y="0" width="100%" height="100%" colorInterpolationFilters="sRGB">
    <feTurbulence type="fractalNoise" baseFrequency={frequency} numOctaves="5" seed={seed} />
    <feColorMatrix values={`0 0 0 0 0  0 0 0 0 0  0 0 0 0 0  ${gain} 0 0 0 ${cut}`} result="mask" />
    <feFlood floodColor={color} />
    <feComposite in2="mask" operator="in" />
    <feComposite in2="SourceAlpha" operator="in" />
  </filter>
);

function RegionMap() {
  return (
    <MapDrawing viewBox="0 0 1546 730" role="img" aria-label="Map of the Pyrenees with hydrobasins">
      <defs>
        <Texture id="woods" color="#bcdaad" frequency=".05 .055" gain={7} cut={-3.6} seed="4" />
        <Texture id="scrub" color="#c6e0b7" frequency=".06" gain={9} cut={-5.3} seed="9" />
        <Texture id="meadow" color="#d6eac5" frequency=".05" gain={4} cut={-1.5} seed="15" />
        <Texture id="hills" color="#c2ddb2" frequency=".06" gain={5} cut={-2.6} seed="22" />
        <clipPath id="land">
          <polygon points={landPoints} />
        </clipPath>
      </defs>
      <g transform={`scale(${UNIT}) translate(-1001 -60)`}>
        <polygon points={landPoints} fill="#f2efe9" />
        <g clipPath="url(#land)">
          <polygon points={landPoints} fill="#fff" filter="url(#scrub)" />
          <g filter="url(#meadow)">
            <path d="M1600 60H2783V400L2640 500 2300 440 2190 600 2217 700 2070 800 1960 850 1890 902H1830L1900 700 1600 560 1480 600 1001 520V400H1600z" />
          </g>
          <g filter="url(#woods)">
            <path d="M1001 410L1300 430 1480 460 1600 430 1680 520 1900 560 2180 590 2217 640 2200 720 2000 700 1900 650 1620 590 1560 500 1480 530 1400 490 1300 500 1180 500 1150 590 1090 590 1060 520 1001 520z" />
            <path d="M1370 620L1470 640 1560 730 1450 790 1360 740zM1170 800L1260 820 1300 902H1230zM1850 790L1800 902H1730L1790 830zM1060 530L1130 540 1160 590 1090 600zM1450 850L1600 840 1700 902H1430z" />
            <path d="M1640 60H1690L1740 330 1640 420 1610 330zM1990 720L2200 690 2150 760 2060 820 1950 840z" />
          </g>
          <g filter="url(#hills)" opacity=".85">
            <path d="M1760 60H2740L2720 400 2600 500 2440 420 2250 420 1780 250z" />
          </g>
        </g>
        <g fill="#f5f4d5" opacity=".6">
          <path d="M1095 660L1130 640 1135 700 1110 740 1090 720zM1300 560L1350 580 1340 610 1290 600zM1405 800L1430 790 1440 820 1410 830z" />
        </g>
        <g fill="#aad3df">
          <path d="M2442 420L2468 425 2470 440 2452 447 2441 435zM2362 420L2390 418 2395 432 2370 434zM2405 435L2412 440 2408 452zM1252 520L1280 510 1275 522 1250 526zM1690 60L1697 80 1703 125 1694 125zM2305 415L2322 411 2320 418z" />
          <path d="M1001 772L1020 750 1024 762 1005 780zM2670 75L2680 72 2674 92zM2720 100L2727 96 2728 110zM2614 150L2630 160 2628 178 2614 170zM2595 250L2606 243 2600 256z" fill="#9ccbe6" />
        </g>
        <path d="M1770 825L1790 815 1800 800 1812 795 1806 812 1830 800 1828 820" fill="none" stroke="#aad3df" strokeWidth="3" />
        <polyline points={northCoast} fill="none" stroke="#8b86ab" strokeWidth="1.500" opacity=".8" />
        <polyline points={southCoast} fill="none" stroke="#8b86ab" strokeWidth="1.500" opacity=".8" />
        <g fill="none" stroke="#998fb3" strokeWidth="2.500">
          {maritime.map((d) => (
            <path key={d} d={d} />
          ))}
        </g>
        <SheetLines data={borders} stroke="#b7a1bd" strokeWidth="1.300" opacity=".8" />
        <SheetLines data={nationalBorders} stroke="#a590ae" strokeWidth="3" />
        <SheetLines data={trunks} stroke="#f8b29b" strokeWidth="1.400" />
        <SheetLines data={motorways} stroke="#e8728d" strokeWidth="1.600" />
      </g>
      {labels.map(([text, x, y, kind]) => (
        <MapLabel key={text + y} x={mapX(x)} y={mapY(y)} $kind={kind}>
          {text}
        </MapLabel>
      ))}
      <g transform={`scale(${UNIT}) translate(-1001 -60)`}>
        {towns.map(([x, y, r = 2.5]) => (
          <circle key={`${x}-${y}`} cx={x} cy={y} r={r} fill="#fff" stroke="#666" strokeWidth="1.200" />
        ))}
        <polygon points={basinPoints} fill="rgba(0,0,0,.11)" stroke="#222" strokeOpacity=".75" strokeWidth="2.200" strokeLinejoin="round" />
        <SheetLines data={basinLines} stroke="#1c1c1c" strokeOpacity=".9" strokeWidth="2" />
        <g transform={sheets.gascony} strokeLinejoin="round">
          {candidate.map((d) => (
            <path key={d} d={d} fill="#fab89a" fillOpacity=".92" stroke="#a5664a" strokeWidth="4" />
          ))}
        </g>
        <g transform={sheets.aragon} strokeLinejoin="round" strokeWidth="4">
          <path d="M810 120H1330L1320 160 1300 180 1280 200 1265 270 1240 300 1220 358 1190 310 1190 290 1165 240 1140 220 1105 205 1090 225 1080 265 1075 305 1040 325 1020 280 1010 262 950 265 940 235 895 228 870 200 820 160z" fill="#f5b896" stroke="#a5664a" />
          <path d="M1280 200L1310 172 1360 165 1400 152 1430 170 1432 200 1445 220 1490 232 1480 252 1440 262 1380 265 1345 270 1320 285 1300 270 1265 270z" fill="#dda05c" stroke="#8a5426" />
          <path d="M1025 140L1030 200 1010 262M1090 140L1080 200 1092 218M1115 140L1150 190 1165 240M1170 195L1200 170 1310 172M1030 210L1090 215M865 140L880 175 940 180M1440 170L1450 215 1470 228" fill="none" stroke="#ff9168" />
        </g>
        <g transform={sheets.gascony} strokeLinejoin="round">
          {occupied.map((d) => (
            <path key={d} d={d} fill="#dda266" stroke="#c0641c" strokeWidth="5" />
          ))}
          <path d="M465 715L520 700 580 655M480 760L540 720 555 690 610 680M635 770L650 750M720 640L725 690 715 705M800 640L805 670 770 690 760 725 790 755 820 750 830 690 800 680M790 755L770 770 770 845M840 755L850 750" fill="none" stroke="#ff9168" strokeWidth="5" />
        </g>
        {[[1728, 527], [1786, 538], [1798, 508], [1876, 533], [2128, 546], [2145, 553]].map(([x, y]) => (
          <circle key={x} cx={x} cy={y} r="7" fill="#1c140c" />
        ))}
        <rect x="2402" y="900" width="381" height="3" fill="#e3eef2" />
      </g>
    </MapDrawing>
  );
}

/* ---------- popups ---------- */

function Codes({ name, count, active }) {
  const items = Array.from({ length: count }, (_, i) => i + 1);
  return (
    <CodeGroup role="group" aria-label={name}>
      <CodeName>{name}</CodeName>
      {items.map((n) => (
        <CodeButton key={n} type="button" $active={n === active} aria-pressed={n === active}>
          {n}
        </CodeButton>
      ))}
    </CodeGroup>
  );
}

function MapEditor() {
  return (
    <MapFrame>
      <RegionMap />
      <ControlStack>
        <ControlBar>
          <ControlButton type="button" aria-label="Zoom in">
            <svg width="18" height="18" viewBox="0 0 18 18"><path d="M9 1v16M1 9h16" stroke="#000" strokeWidth="3" /></svg>
          </ControlButton>
          <ControlButton type="button" aria-label="Zoom out">
            <svg width="16" height="18" viewBox="0 0 16 18"><path d="M0 9h16" stroke="#000" strokeWidth="3" /></svg>
          </ControlButton>
        </ControlBar>
        <ControlBar>
          <ControlButton type="button" aria-label="Draw a marker"><PinIcon /></ControlButton>
        </ControlBar>
        <ControlBar>
          <ControlButton type="button" aria-label="Move"><MoveIcon /></ControlButton>
        </ControlBar>
        <ControlBar>
          <ControlButton type="button" aria-label="Layers" $large><LayersIcon /></ControlButton>
        </ControlBar>
      </ControlStack>
      <PopupCard $left={414} $top={56} $width={280} $bottom={38}>
        <CloseButton type="button" aria-label="Close">×</CloseButton>
        <p>Hydrobasin ID: 2080020420</p>
        <ActionButton type="button" $block $tone="green" $height={58}>
          <PlusIcon />Add hydrobasin
        </ActionButton>
      </PopupCard>
      <PopupCard $left={766} $top={63} $width={317} $bottom={18}>
        <CloseButton type="button" aria-label="Close">×</CloseButton>
        <p>Hydrobasin ID: 2080583270</p>
        <ActionButton type="button" $block $tone="amber" $height={58}>
          <TrashIcon />Remove hydrobasin
        </ActionButton>
        <CodeGroups>
          <Codes name="Edit Presence:" count={6} active={3} />
          <Codes name="Edit Origin:" count={6} active={1} />
          <Codes name="Edit Seasonal:" count={5} active={1} />
        </CodeGroups>
      </PopupCard>
      <ScaleBox>
        <ScaleLine $width={70}>50 km</ScaleLine>
        <ScaleLine $width={113} $joined>50 mi</ScaleLine>
      </ScaleBox>
    </MapFrame>
  );
}

function EditPanel() {
  return (
    <Panel>
      <PanelTitle>Edit hydrobasins</PanelTitle>
      <Fields>
        {["Presence", "Origin", "Seasonal"].map((name) => (
          <Field key={name}>
            {name}
            <FieldInput type="text" defaultValue="1" />
          </Field>
        ))}
      </Fields>
      <ButtonRow $before={20}>
        <ActionButton type="button" $tone="green" $width={215} $height={88}>
          <StackedLabel>
            <LabelLine><PlusIcon size={16} />Add / edit</LabelLine>
            <span>hydrobasins</span>
          </StackedLabel>
        </ActionButton>
        <ActionButton type="button" $tone="amber" $width={215} $height={88}>
          <StackedLabel>
            <LabelLine><TrashIcon />Remove</LabelLine>
            <span>hydrobasins</span>
          </StackedLabel>
        </ActionButton>
      </ButtonRow>
      <PanelTitle $center>Save changes</PanelTitle>
      <ButtonRow $before={10}>
        <ActionButton type="button" $tone="amber" $width={243} $height={59}>
          <TrashIcon />Discard changes
        </ActionButton>
        <ActionButton type="button" $tone="green" $width={219} $height={59}>
          <FaRegFloppyDisk size={18} />Save changes
        </ActionButton>
      </ButtonRow>
    </Panel>
  );
}

const connectorPaths = [
  "M1071 200.500C1250 162 1430 130 1600 101C1790 69 1970 52 2150 43C2420 31 2600 31 2780 39C2920 44 3060 54 3163 70C3310 94 3430 117 3545 157C3660 198 3780 255 3835 320",
  "M939 372L980 362Q1240 300 1495 229",
  "M939 590Q1420 445 1907 243",
  "M936 800Q1420 640 1907 412",
  "M857 1013L1032 1014",
  "M3269 597V874",
  "M3617 264L3804 541",
  "M3504 383L3766 749",
];

export default function App() {
  return (
    <>
      <GlobalStyle />
      <Page>
        <NoteColumn $side="left">
          <NoteTitle>{"Edit individual\n\u00a0hydrobasins"}</NoteTitle>
          <Note $before={46}>{"Add an individual hydrobasin\nin the distribution"}</Note>
          <Note $before={51}>{"Remove an individual hydrobasin\u00a0\nfrom the distribution"}</Note>
          <Note $before={61}>{"Edit attributes of an individual\nhydrobasin"}</Note>
          <Note $before={56}>{"Complete text attributes\u00a0\n(compiler, data sensitive...)"}</Note>
        </NoteColumn>
        <Editor>
          <MapEditor />
          <AccordionGap />
          <AccordionHeader type="button" aria-expanded="false">
            <TextGlyph>Aa</TextGlyph>
            <AccordionLabel>Fill text attributes</AccordionLabel>
            <ChevronIcon />
          </AccordionHeader>
        </Editor>
        <SideColumn>
          <EditPanel />
          <PanelNote $before={236}>
            Save or discard edits
            <br />
            of your distribution
          </PanelNote>
        </SideColumn>
        <NoteColumn $side="right">
          <NoteTitle>{"Edit multiple\nhydrobasins"}</NoteTitle>
          <Note $before={46}>{"1) Draw a marker in each\u00a0\nhydrobasins to add or remove\n(by double clicking)"}</Note>
          <Note $before={41}>{"2) Set attributes to apply\u00a0\nto new hydrobasins"}</Note>
          <Note $before={46}>{"3) Add or remove all hydrobasins\u00a0\nwhere a marker was placed"}</Note>
        </NoteColumn>
        <Connectors viewBox="0 0 4721 1161" aria-hidden="true">
          <g fill="none" stroke="#000" strokeWidth="6">
            {connectorPaths.map((d) => (
              <path key={d} d={d} />
            ))}
          </g>
        </Connectors>
      </Page>
    </>
  );
}
